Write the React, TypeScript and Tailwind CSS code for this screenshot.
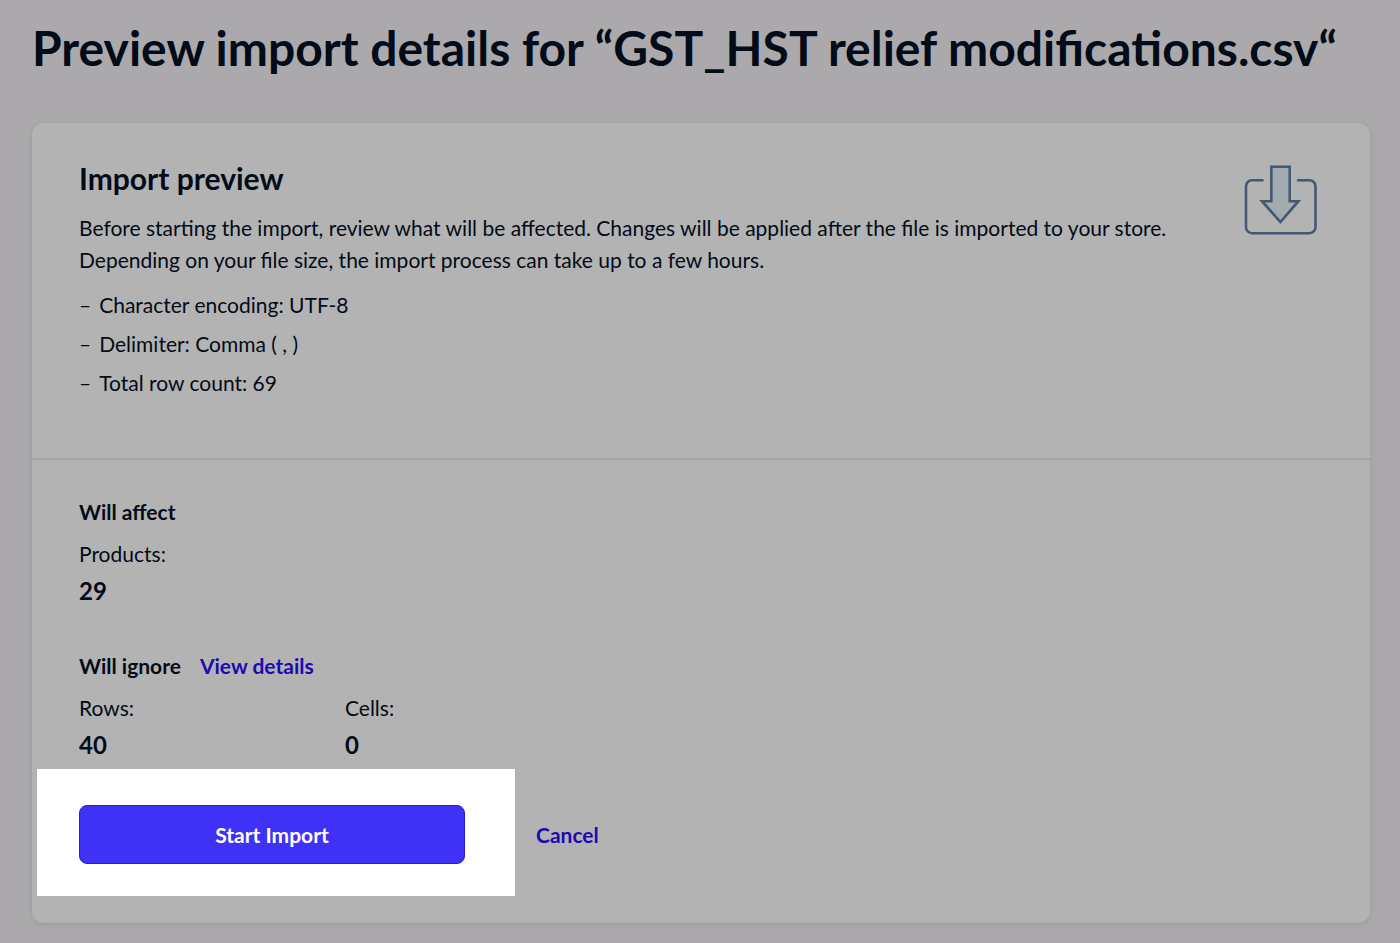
import type { ReactNode } from "react";

const FILE_DETAILS = [
  "Character encoding: UTF-8",
  "Delimiter: Comma ( , )",
  "Total row count: 69",
];

export default function App() {
  return (
    <main className="min-h-screen bg-[#aba9ab] pt-4 pr-[30px] pb-5 pl-8 font-['Lato',sans-serif] text-[21px] text-[#020b18]">
      <h1 className="text-5xl leading-16 font-bold">
        Preview import details for “GST_HST relief modifications.csv“
      </h1>

      <div className="mt-[43px] rounded-xl bg-[#b3b3b3] shadow-[0_1px_4px_rgba(110,120,120,0.3)]">
        <section className="flex items-start justify-between border-b-2 border-[#a4a5a6] pt-[35px] pr-[53px] pb-[59px] pl-[47px]">
          <div>
            <h2 className="text-3xl leading-10 font-bold">Import preview</h2>
            <p className="mt-3.5 max-w-[1100px] leading-8">
              Before starting the import, review what will be affected. Changes
              will be applied after the file is imported to your store. Depending
              on your file size, the import process can take up to a few hours.
            </p>
            <ul className="mt-[13px] space-y-[7px] leading-8">
              {FILE_DETAILS.map((detail) => (
                <li key={detail} className="flex gap-2">
                  <span aria-hidden="true">–</span>
                  {detail}
                </li>
              ))}
            </ul>
          </div>
          <ImportIcon />
        </section>

        <section className="pt-9 pb-[27px] pl-[47px]">
          <h3 className="leading-8 font-bold">Will affect</h3>
          <dl className="mt-2.5">
            <Stat label="Products:">29</Stat>
          </dl>

          <div className="mt-[41px] flex gap-[19px] leading-8">
            <h3 className="font-bold">Will ignore</h3>
            <a href="#details" className="font-bold text-[#1b0bb0]">
              View details
            </a>
          </div>
          <dl className="mt-2.5 flex">
            <Stat label="Rows:">40</Stat>
            <Stat label="Cells:">0</Stat>
          </dl>

          <div className="mt-1.5 flex items-center gap-[21px]">
            <div className="-ml-[42px] bg-white pt-9 pr-[50px] pb-8 pl-[42px]">
              <button
                type="button"
                className="h-[59px] w-[386px] rounded-lg border border-[#2a1be0] bg-[#3f31f5] font-bold text-white"
              >
                Start Import
              </button>
            </div>
            <a href="#cancel" className="pt-1 font-bold text-[#1b0bb0]">
              Cancel
            </a>
          </div>
        </section>
      </div>
    </main>
  );
}

function Stat({ label, children }: { label: string; children: ReactNode }) {
  return (
    <div className="w-[266px]">
      <dt className="leading-8">{label}</dt>
      <dd className="mt-[3px] text-2xl leading-9 font-bold">{children}</dd>
    </div>
  );
}

function ImportIcon() {
  return (
    <svg
      className="mt-[7px] h-[70px] w-[73px] shrink-0"
      viewBox="0 0 73 70"
      fill="none"
      stroke="#445870"
      strokeWidth="2.6"
      strokeLinecap="round"
      strokeLinejoin="round"
      aria-hidden="true"
    >
      <path d="M18.5 15.2H8a6 6 0 0 0-6 6v41a6 6 0 0 0 6 6h57.5a6 6 0 0 0 6-6v-41a6 6 0 0 0-6-6H54" />
      <path
        d="M27.3 1.8h18.4v34.4h8.7L36.4 57 18 36.2h9.3z"
        fill="#a1abb0"
        strokeLinejoin="miter"
      />
    </svg>
  );
}
